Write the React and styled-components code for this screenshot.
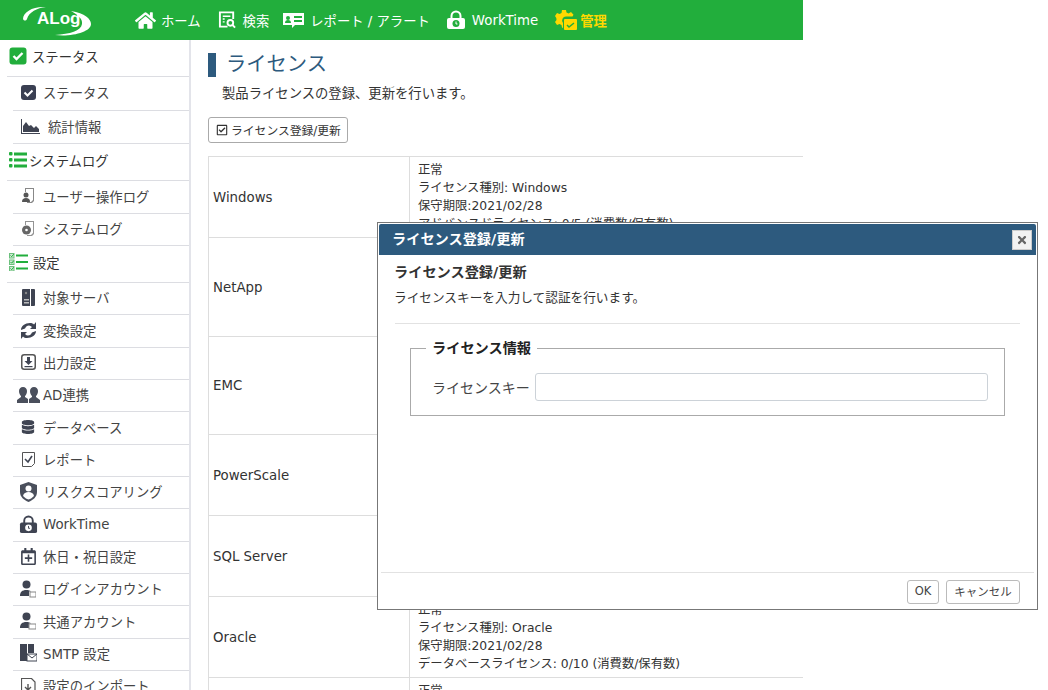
import React from "react";
import styled, { createGlobalStyle } from "styled-components";
import { FaHome, FaDatabase, FaRegCheckSquare, FaTimes, FaRegCalendarPlus } from "react-icons/fa";

const GREEN = "#22ae3c";
const NAVY = "#2d5a7e";
const FONT = `"DejaVu Sans", "Noto Sans CJK JP", sans-serif`;

const Global = createGlobalStyle`
  html, body { margin: 0; padding: 0; background: #fff; }
  body { font-family: ${FONT}; font-size: 12px; color: #333; overflow: hidden; }
`;

const Page = styled.div`
  position: relative;
  width: 1048px;
  height: 690px;
  overflow: hidden;
`;

const Shell = styled.div`
  width: 803px;
  height: 690px;
  display: flex;
  flex-direction: column;
`;

const TopBar = styled.header`
  flex: none;
  height: 40px;
  background: ${GREEN};
  display: flex;
  align-items: center;
`;

const LogoBox = styled.div`
  position: relative;
  width: 135px;
  height: 40px;
  color: #fff;
  svg { display: block; }
`;

const LogoText = styled.span`
  position: absolute;
  left: 37px;
  top: 9px;
  font: bold 17px/20px "Liberation Sans", sans-serif;
  color: #fff;
`;

const NavItem = styled.a`
  display: flex;
  align-items: center;
  gap: ${({ $gap }) => $gap ?? 6}px;
  margin-right: ${({ $mr }) => $mr ?? 15}px;
  color: ${({ $active }) => ($active ? "#ffd800" : "#fff")};
  font-size: 13.33px;
  font-weight: ${({ $active }) => ($active ? "bold" : "normal")};
  white-space: nowrap;
  svg { display: block; flex: none; }
`;

const Body = styled.div`
  flex: 1;
  min-height: 0;
  display: flex;
`;

const Side = styled.aside`
  flex: none;
  width: 182px;
  padding-left: 7px;
  border-right: 2px solid #e3e4ea;
  overflow: hidden;
`;

const SectionRow = styled.div`
  height: ${({ $h }) => $h}px;
  box-sizing: border-box;
  border-bottom: 1px solid #dcdde2;
  display: flex;
  align-items: center;
  padding: 0 0 4px 2px;
  gap: ${({ $gap }) => $gap}px;
  font-size: 13.33px;
  color: #333;
  svg { display: block; flex: none; }
`;

const ItemRow = styled.div`
  height: ${({ $h }) => $h ?? 32.35}px;
  margin-left: 6px;
  box-sizing: border-box;
  border-bottom: 1px solid #dcdde2;
  display: flex;
  align-items: center;
  padding-bottom: 2px;
  font-size: 13.33px;
  color: #444;
  white-space: nowrap;
`;

const ItemIcon = styled.span`
  flex: none;
  width: ${({ $w }) => $w ?? 30}px;
  display: flex;
  justify-content: center;
  color: #3f4452;
  svg { display: block; }
`;

const Main = styled.main`
  flex: 1;
  min-width: 0;
  padding: 13px 0 0 17px;
  overflow: hidden;
`;

const Title = styled.h1`
  margin: 0;
  height: 24px;
  border-left: 8px solid ${NAVY};
  padding-left: 10px;
  font-size: 20.3px;
  font-weight: normal;
  line-height: 22px;
  color: ${NAVY};
`;

const Desc = styled.p`
  margin: 8px 0 0 14px;
  font-size: 13.33px;
  line-height: 18px;
`;

const ActionButton = styled.button`
  display: flex;
  align-items: center;
  gap: 3px;
  margin-top: 14px;
  height: 26px;
  width: 140px;
  padding: 0 0 2px 7px;
  background: #fff;
  border: 1px solid #aaa;
  border-radius: 3px;
  font: 11.8px ${FONT};
  color: #333;
  white-space: nowrap;
  svg { flex: none; margin-top: 2px; }
`;

const Table = styled.table`
  width: 595px;
  margin-top: 13px;
  border-collapse: collapse;
  td { border: 1px solid #ddd; border-right: 0; vertical-align: middle; }
`;

const NameCell = styled.td`
  width: 196px;
  padding: 0 0 0 4px;
  font-size: 13.33px;
  color: #333;
`;

const InfoCell = styled.td`
  padding: ${({ $py }) => $py ?? 4}px 8px;
  font-size: 12.33px;
  line-height: 18px;
  color: #333;
`;

const Modal = styled.section`
  position: absolute;
  left: 377px;
  top: 222px;
  width: 661px;
  height: 388px;
  box-sizing: border-box;
  background: #fff;
  border: 1px solid #777;
  padding: 1px;
  display: flex;
  flex-direction: column;
`;

const ModalBar = styled.div`
  flex: none;
  height: 31px;
  box-sizing: border-box;
  background: ${NAVY};
  border-radius: 2px 2px 0 0;
  display: flex;
  align-items: center;
  justify-content: space-between;
  padding: 0 4px 0 13px;
  color: #fff;
  font-size: 14.2px;
  font-weight: bold;
`;

const BarTitle = styled.span`
  margin-top: -3px;
`;

const CloseButton = styled.button`
  width: 20px;
  height: 20px;
  padding: 0;
  display: flex;
  align-items: center;
  justify-content: center;
  background: #f2f2f2;
  border: 1px solid #ccc;
  color: #666;
`;

const ModalBody = styled.div`
  flex: 1;
  padding: 8px 16px 0 16px;
`;

const ModalHeading = styled.h2`
  margin: 0 0 0 -1px;
  font-size: 14.2px;
  font-weight: bold;
  line-height: 18px;
  color: #333;
`;

const ModalDesc = styled.p`
  margin: 8px 0 0 -1px;
  font-size: 12.67px;
  line-height: 18px;
`;

const Rule = styled.hr`
  margin: 16px 0 0;
  border: 0;
  border-top: 1px solid #e2e2e2;
`;

const Field = styled.fieldset`
  margin: 15px 15px 0;
  padding: 16px 16px 13px 21px;
  height: 77px;
  box-sizing: border-box;
  border: 1px solid #aaa;
  min-width: 0;
  legend {
    margin-left: -6px;
    padding: 0 6px;
    font-size: 14.2px;
    font-weight: bold;
    color: #222;
    line-height: 18px;
  }
`;

const FieldRow = styled.label`
  display: flex;
  align-items: center;
  gap: 5px;
  font-size: 14px;
  color: #444;
  white-space: nowrap;
`;

const KeyInput = styled.input`
  flex: 1;
  min-width: 0;
  height: 28px;
  box-sizing: border-box;
  border: 1px solid #ccd2d8;
  border-radius: 3px;
  background: #fff;
`;

const ModalFoot = styled.footer`
  flex: none;
  height: 36px;
  box-sizing: border-box;
  margin: 0 2px;
  border-top: 1px solid #e2e2e2;
  display: flex;
  justify-content: flex-end;
  align-items: flex-start;
  gap: 7px;
  padding: 7px 14px 0 0;
`;

const FootButton = styled.button`
  height: 24px;
  width: ${({ $w }) => $w}px;
  padding: 0 0 2px;
  background: #fff;
  border: 1px solid #bbb;
  border-radius: 3px;
  font: 11.5px ${FONT};
  color: #444;
`;

// hand drawn glyphs, no package has these
const Swoosh = () => (
  <svg width="135" height="40" viewBox="0 0 135 40">
    <path d="M23 19C23 12 33 6 46 7 37 8 29 12 27 19c-1 2-3 2-4 0z" fill="#fff" />
    <path d="M71 11c14 2 20 8 20 13 0 8-19 13-36 11 15-1 26-4 27-11 1-5-4-9-11-13z" fill="#fff" />
  </svg>
);

const SearchDoc = ({ c = "#fff" }) => (
  <svg width="19" height="20" viewBox="0 0 20 20" fill="none" stroke={c}>
    <path d="M10 17H2V2h14v7" strokeWidth="2" />
    <path d="M5 6h8M5 9h2M5 12h2" strokeWidth="1.5" />
    <circle cx="13" cy="13" r="3" strokeWidth="2" />
    <path d="M15 15l3 3" strokeWidth="2" />
  </svg>
);

const ReportIcon = () => (
  <svg width="21" height="20" viewBox="0 0 21 20">
    <path fillRule="evenodd" fill="#fff" d="M0 3h21v12H12l-3 3v-3H0zM5 6a2 2 0 100 4 2 2 0 000-4zM2 13h6c0-2-1-3-3-3s-3 1-3 3zM11 6v2h8V6zM11 10v2h8v-2z" />
  </svg>
);

const LockClock = ({ c = "#fff", size = 20, hole = GREEN }) => (
  <svg width={size} height={size} viewBox="0 0 20 20">
    <path d="M5.5 9V6a4.5 4.5 0 019 0v3" fill="none" stroke={c} strokeWidth="2" />
    <rect x="1" y="8" width="18" height="11" rx="2" fill={c} />
    <circle cx="10" cy="13.5" r="3.5" fill={hole} />
    <path d="M10 11.5v2.5h1.5" fill="none" stroke={c} strokeWidth="1" />
  </svg>
);

const GearCheck = () => (
  <svg width="22" height="22" viewBox="0 0 22 22">
    <path fill="#ffd800" d="M7 1h4l.5 2.500 2 1L16 3l2.500 2.800-1 1.700H11a4 4 0 00-3 6.500v5l-1-.5-.5-2.500-2-1L2 16l-2-3 1.500-2-.2-2L0 7l2-3 2.500 1 2-1z" />
    <rect x="9" y="10" width="13" height="11" rx="1" fill="#ffd800" />
    <path d="M12 16l2 2 5-4" fill="none" stroke={GREEN} strokeWidth="1.500" />
  </svg>
);

const GreenCheck = () => (
  <svg width="18" height="18" viewBox="0 0 18 18">
    <rect width="17" height="17" x=".5" y=".5" rx="3" fill="#22ae3c" />
    <path d="M4.500 9l3 3 6-6" fill="none" stroke="#fff" strokeWidth="2.400" />
  </svg>
);

const DarkCheck = () => (
  <svg width="15" height="15" viewBox="0 0 15 15">
    <rect width="15" height="15" rx="3" fill="#3a3f52" />
    <path d="M3.500 7.500l3 3 5-5" fill="none" stroke="#fff" strokeWidth="2" />
  </svg>
);

const AreaChart = () => (
  <svg width="19" height="15" viewBox="0 0 19 15" fill="#3f4452">
    <path d="M0 0h1v14h18v1H0z" />
    <path d="M2 13V7l3-4 3 4 2-1 3 3 2-2 3 3v3z" />
  </svg>
);

const ListIcon = () => (
  <svg width="18" height="16" viewBox="0 0 18 16" fill="#22ae3c">
    <rect y="0" width="3.500" height="3.500" rx="1" />
    <rect y="6" width="3.500" height="3.500" rx="1" />
    <rect y="12" width="3.500" height="3.500" rx="1" />
    <rect x="5" y="0.500" width="13" height="3" />
    <rect x="5" y="6.500" width="13" height="3" />
    <rect x="5" y="12.500" width="13" height="3" />
  </svg>
);

const CheckList = () => (
  <svg width="19" height="18" viewBox="0 0 19 18">
    {[0, 6.500, 13].map((y) => (
      <g key={y}>
        <rect x=".5" y={y + 0.5} width="4.500" height="4.500" fill="#cfe9d4" stroke="#6cc07d" />
        <path d={`M1.500 ${y + 2.500}l1.200 1.200 2-2.500`} fill="none" stroke="#22ae3c" />
        <rect x="7" y={y + 1.500} width="12" height="2" fill="#22ae3c" />
      </g>
    ))}
  </svg>
);

const PersonDoc = () => (
  <svg width="14" height="16" viewBox="0 0 14 16" fill="#555">
    <path d="M4 0h9v13l-2 2H6v-1h4l2-2V1H5v3H4z" opacity=".7" />
    <circle cx="5" cy="7" r="2.500" />
    <path d="M1 14c0-3 1.500-4 4-4s4 1 4 4z" />
  </svg>
);

const DiscDoc = () => (
  <svg width="14" height="16" viewBox="0 0 14 16" fill="#666">
    <path d="M4 0h9v13l-2 2H6v-1h4l2-2V1H5v3H4z" opacity=".7" />
    <circle cx="5.500" cy="9" r="4.500" />
    <circle cx="5.500" cy="9" r="1.300" fill="#fff" />
  </svg>
);

const ServerIcon = () => (
  <svg width="13" height="17" viewBox="0 0 13 17">
    <rect width="13" height="17" rx="1" fill="#3f4452" />
    <rect x="8" width="1" height="17" fill="#fff" />
    <rect x="2" y="10" width="5" height="1.500" fill="#bbb" />
    <rect x="2" y="13" width="5" height="1.500" fill="#bbb" />
    <circle cx="4" cy="4" r="1.200" fill="#888" />
  </svg>
);

const SyncIcon = () => (
  <svg width="19" height="17" viewBox="0 0 19 17" fill="#3f4452">
    <path d="M2 8c0-4 4-7 9-7 2 0 3 .5 4 1.500L17 0v7h-6l2-2c-1-1-2-1.500-3-1.500-2 0-3 1-4 3z" />
    <path d="M17 9c0 4-4 7-9 7-2 0-3-.5-4-1.500L2 17v-7h6l-2 2c1 1 2 1.500 3 1.500 2 0 3-1 4-3z" />
  </svg>
);

const ExportIcon = () => (
  <svg width="15" height="16" viewBox="0 0 15 16">
    <rect x=".75" y=".75" width="13.500" height="14.500" rx="2.500" fill="none" stroke="#555" strokeWidth="1.500" />
    <path d="M6 3h3v4h2.500l-4 4-4-4H6z" fill="#3f4452" />
    <rect x="3.500" y="12" width="8" height="1.200" fill="#3f4452" />
  </svg>
);

const TwoUsers = () => (
  <svg width="23" height="18" viewBox="0 0 23 18" fill="#4a4f5c">
    <path d="M6 1c2.500 0 4 2 4 4 0 2.500-1 4-2 5v1l3 2v4H0v-3l4-3v-1C3 9 2 7.500 2 5c0-2 1.500-4 4-4z" />
    <path d="M17 1c2.500 0 4 2 4 4 0 2.500-1 4-2 5v1l4 3v3H12v-4l3-2v-1c-1-1-2-2.500-2-5 0-2 1.500-4 4-4z" />
  </svg>
);

const CheckDoc = () => (
  <svg width="13" height="15" viewBox="0 0 13 15" fill="none" stroke="#555">
    <path d="M.5.5h12v11l-3 3H.5z" />
    <path d="M3 7l3 3 4-6" strokeWidth="1.600" stroke="#3f4452" />
  </svg>
);

const ShieldUser = () => (
  <svg width="17" height="20" viewBox="0 0 17 20">
    <path d="M8.500 0L17 3v7c0 5-4 8-8.500 10C4 18 0 15 0 10V3z" fill="#4a4f5c" />
    <circle cx="8.500" cy="6.500" r="3" fill="#fff" />
    <path d="M3 14c.5-3 3-4 5.500-4s5 1 5.500 4c-1.500 1.500-3.500 3-5.500 3.500C6.500 17 4.500 15.500 3 14z" fill="#fff" />
  </svg>
);

const UserBadge = ({ wide }) => (
  <svg width="16" height="18" viewBox="0 0 16 18" fill="#3f4452">
    <circle cx="6.500" cy="4.500" r="4" />
    <path d="M0 16c0-4 2-6 6.500-6 2 0 3.500.5 4.500 1.500H9V16z" />
    <rect x={wide ? 9 : 10} y="12" width={wide ? 7 : 6} height="5" fill="#fff" stroke="#888" />
  </svg>
);

const ServerMail = () => (
  <svg width="17" height="18" viewBox="0 0 17 18">
    <rect x="0" width="7" height="17" fill="#3f4452" />
    <rect x="8" width="6" height="9" fill="#3f4452" />
    <rect x="7" y="10" width="10" height="7" fill="#fff" stroke="#3f4452" />
    <path d="M7 10l5 4 5-4" fill="none" stroke="#3f4452" />
  </svg>
);

const ImportIcon = () => (
  <svg width="15" height="16" viewBox="0 0 15 16" fill="none" stroke="#555">
    <path d="M.5.5h10l3.500 3.500v11H.5z" strokeWidth="1.200" />
    <path d="M7 6v6M4 9l3 3 3-3" strokeWidth="1.400" />
  </svg>
);

const items1 = [
  { icon: <DarkCheck />, label: "ステータス", h: 34 },
  { icon: <AreaChart />, label: "統計情報", h: 33, w: 35 },
];
const items2 = [
  { icon: <PersonDoc />, label: "ユーザー操作ログ", h: 33 },
  { icon: <DiscDoc />, label: "システムログ", h: 32 },
];
const items3 = [
  { icon: <ServerIcon />, label: "対象サーバ" },
  { icon: <SyncIcon />, label: "変換設定" },
  { icon: <ExportIcon />, label: "出力設定" },
  { icon: <TwoUsers />, label: "AD連携" },
  { icon: <FaDatabase size={14} />, label: "データベース" },
  { icon: <CheckDoc />, label: "レポート" },
  { icon: <ShieldUser />, label: "リスクスコアリング" },
  { icon: <LockClock c="#3f4452" size={19} hole="#fff" />, label: "WorkTime" },
  { icon: <FaRegCalendarPlus size={17} />, label: "休日・祝日設定" },
  { icon: <UserBadge />, label: "ログインアカウント" },
  { icon: <UserBadge wide />, label: "共通アカウント" },
  { icon: <ServerMail />, label: "SMTP 設定" },
  { icon: <ImportIcon />, label: "設定のインポート" },
];

const licenses = [
  { name: "Windows", lines: ["正常", "ライセンス種別: Windows", "保守期限:2021/02/28", "アドバンスドライセンス: 0/5 (消費数/保有数)"] },
  { name: "NetApp", lines: ["正常", "ライセンス種別: NetApp", "保守期限:2021/02/28", "アドバンスドライセンス: 0/5 (消費数/保有数)", "ストレージライセンス: 0/5 (消費数/保有数)"] },
  { name: "EMC", py: 3.5, lines: ["正常", "ライセンス種別: EMC", "保守期限:2021/02/28", "アドバンスドライセンス: 0/5 (消費数/保有数)", "ストレージライセンス: 0/5 (消費数/保有数)"] },
  { name: "PowerScale", lines: ["正常", "ライセンス種別: PowerScale", "保守期限:2021/02/28", "ストレージライセンス: 0/5 (消費数/保有数)"] },
  { name: "SQL Server", lines: ["正常", "ライセンス種別: SQL Server", "保守期限:2021/02/28", "データベースライセンス: 0/10 (消費数/保有数)"] },
  { name: "Oracle", lines: ["正常", "ライセンス種別: Oracle", "保守期限:2021/02/28", "データベースライセンス: 0/10 (消費数/保有数)"] },
  { name: "", lines: ["正常"] },
];

const SideItems = ({ list }) =>
  list.map((it) => (
    <ItemRow key={it.label} $h={it.h}>
      <ItemIcon $w={it.w}>{it.icon}</ItemIcon>
      {it.label}
    </ItemRow>
  ));

export default function App() {
  return (
    <Page>
      <Global />
      <Shell>
        <TopBar>
          <LogoBox>
            <Swoosh />
            <LogoText>ALog</LogoText>
          </LogoBox>
          <NavItem $gap={5} $mr={17}><FaHome size={21} />ホーム</NavItem>
          <NavItem $mr={14}><SearchDoc />検索</NavItem>
          <NavItem $mr={16}><ReportIcon />レポート / アラート</NavItem>
          <NavItem $mr={17}><LockClock />WorkTime</NavItem>
          <NavItem $gap={3} $active><GearCheck />管理</NavItem>
        </TopBar>
        <Body>
          <Side>
            <SectionRow $h={37} $gap={5}><GreenCheck />ステータス</SectionRow>
            <SideItems list={items1} />
            <SectionRow $h={37} $gap={2}><ListIcon />システムログ</SectionRow>
            <SideItems list={items2} />
            <SectionRow $h={37} $gap={5}><CheckList />設定</SectionRow>
            <SideItems list={items3} />
          </Side>
          <Main>
            <Title>ライセンス</Title>
            <Desc>製品ライセンスの登録、更新を行います。</Desc>
            <ActionButton><FaRegCheckSquare size={12} />ライセンス登録/更新</ActionButton>
            <Table>
              <tbody>
                {licenses.map((l, i) => (
                  <tr key={i}>
                    <NameCell>{l.name}</NameCell>
                    <InfoCell $py={l.py}>{l.lines.map((t) => <div key={t}>{t}</div>)}</InfoCell>
                  </tr>
                ))}
              </tbody>
            </Table>
          </Main>
        </Body>
      </Shell>
      <Modal>
        <ModalBar>
          <BarTitle>ライセンス登録/更新</BarTitle>
          <CloseButton aria-label="close"><FaTimes size={12} /></CloseButton>
        </ModalBar>
        <ModalBody>
          <ModalHeading>ライセンス登録/更新</ModalHeading>
          <ModalDesc>ライセンスキーを入力して認証を行います。</ModalDesc>
          <Rule />
          <Field>
            <legend>ライセンス情報</legend>
            <FieldRow>ライセンスキー<KeyInput /></FieldRow>
          </Field>
        </ModalBody>
        <ModalFoot>
          <FootButton $w={32}>OK</FootButton>
          <FootButton $w={74}>キャンセル</FootButton>
        </ModalFoot>
      </Modal>
    </Page>
  );
}
